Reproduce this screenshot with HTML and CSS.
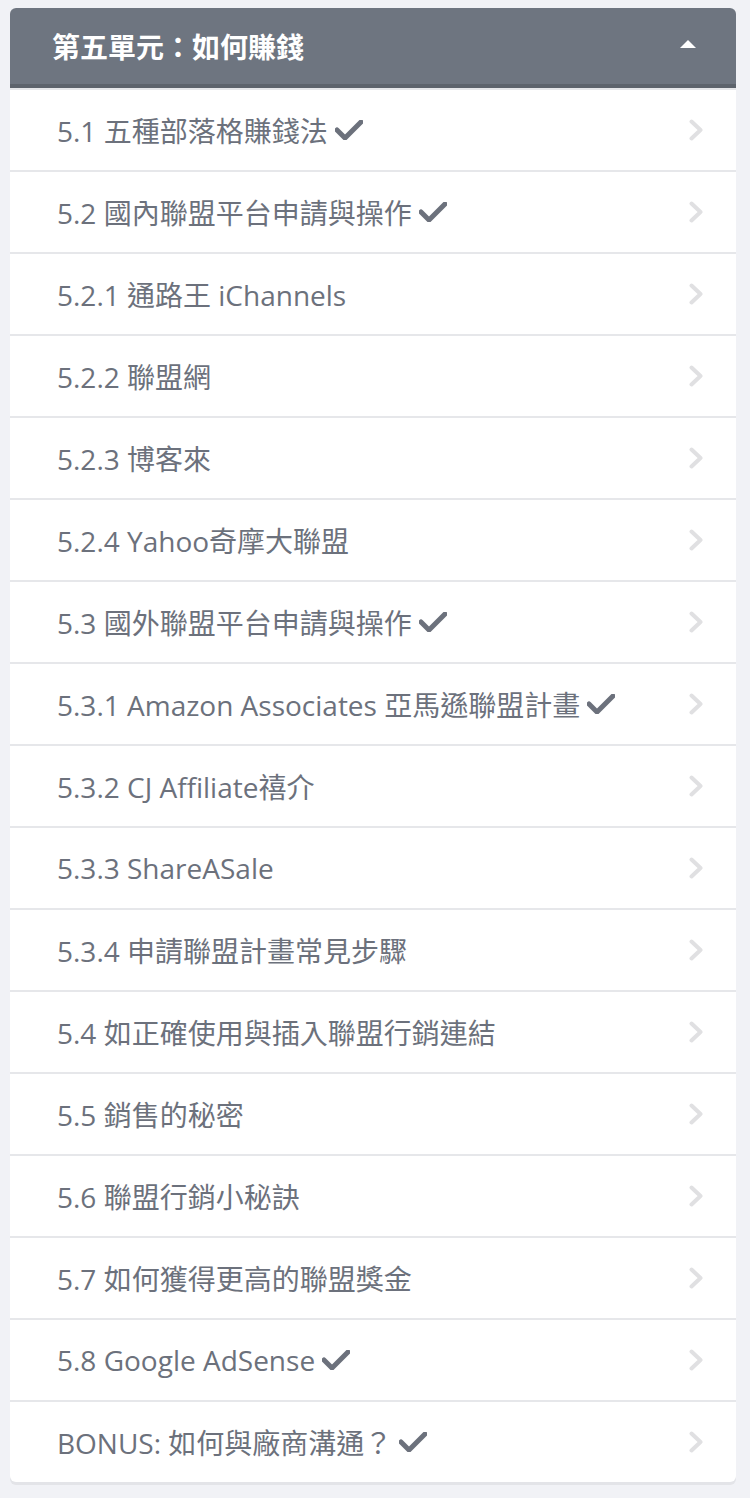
FILE: index.html
```html
<!DOCTYPE html>
<html lang="zh-Hant">
<head>
<meta charset="utf-8">
<link rel="stylesheet" href="styles.css">
</head>
<body>
<div class="wrap">
  <div class="card">
    <div class="head">
      <span class="head-title">第五單元：如何賺錢</span>
      <svg class="caret" width="16" height="8" viewBox="0 0 16 8"><path d="M0 8 L8 0 L16 8 Z" fill="#fff"/></svg>
    </div>
    <ul class="list">
      <li class="row"><span class="label">5.1 五種部落格賺錢法<svg class="check" viewBox="0 0 28 20"><path d="M2 10 L10 18 L26 2" fill="none" stroke="currentColor" stroke-width="5" stroke-linecap="round" stroke-linejoin="round"/></svg></span><svg class="chev" viewBox="0 0 14 22"><path d="M2.5 2.5 L11.5 11 L2.5 19.5" fill="none" stroke="currentColor" stroke-width="4" stroke-linecap="round" stroke-linejoin="round"/></svg></li>
      <li class="row"><span class="label">5.2 國內聯盟平台申請與操作<svg class="check" viewBox="0 0 28 20"><path d="M2 10 L10 18 L26 2" fill="none" stroke="currentColor" stroke-width="5" stroke-linecap="round" stroke-linejoin="round"/></svg></span><svg class="chev" viewBox="0 0 14 22"><path d="M2.5 2.5 L11.5 11 L2.5 19.5" fill="none" stroke="currentColor" stroke-width="4" stroke-linecap="round" stroke-linejoin="round"/></svg></li>
      <li class="row"><span class="label">5.2.1 通路王 iChannels</span><svg class="chev" viewBox="0 0 14 22"><path d="M2.5 2.5 L11.5 11 L2.5 19.5" fill="none" stroke="currentColor" stroke-width="4" stroke-linecap="round" stroke-linejoin="round"/></svg></li>
      <li class="row"><span class="label">5.2.2 聯盟網</span><svg class="chev" viewBox="0 0 14 22"><path d="M2.5 2.5 L11.5 11 L2.5 19.5" fill="none" stroke="currentColor" stroke-width="4" stroke-linecap="round" stroke-linejoin="round"/></svg></li>
      <li class="row"><span class="label">5.2.3 博客來</span><svg class="chev" viewBox="0 0 14 22"><path d="M2.5 2.5 L11.5 11 L2.5 19.5" fill="none" stroke="currentColor" stroke-width="4" stroke-linecap="round" stroke-linejoin="round"/></svg></li>
      <li class="row"><span class="label">5.2.4 Yahoo奇摩大聯盟</span><svg class="chev" viewBox="0 0 14 22"><path d="M2.5 2.5 L11.5 11 L2.5 19.5" fill="none" stroke="currentColor" stroke-width="4" stroke-linecap="round" stroke-linejoin="round"/></svg></li>
      <li class="row"><span class="label">5.3 國外聯盟平台申請與操作<svg class="check" viewBox="0 0 28 20"><path d="M2 10 L10 18 L26 2" fill="none" stroke="currentColor" stroke-width="5" stroke-linecap="round" stroke-linejoin="round"/></svg></span><svg class="chev" viewBox="0 0 14 22"><path d="M2.5 2.5 L11.5 11 L2.5 19.5" fill="none" stroke="currentColor" stroke-width="4" stroke-linecap="round" stroke-linejoin="round"/></svg></li>
      <li class="row"><span class="label">5.3.1 Amazon Associates 亞馬遜聯盟計畫<svg class="check" viewBox="0 0 28 20"><path d="M2 10 L10 18 L26 2" fill="none" stroke="currentColor" stroke-width="5" stroke-linecap="round" stroke-linejoin="round"/></svg></span><svg class="chev" viewBox="0 0 14 22"><path d="M2.5 2.5 L11.5 11 L2.5 19.5" fill="none" stroke="currentColor" stroke-width="4" stroke-linecap="round" stroke-linejoin="round"/></svg></li>
      <li class="row"><span class="label">5.3.2 CJ Affiliate禧介</span><svg class="chev" viewBox="0 0 14 22"><path d="M2.5 2.5 L11.5 11 L2.5 19.5" fill="none" stroke="currentColor" stroke-width="4" stroke-linecap="round" stroke-linejoin="round"/></svg></li>
      <li class="row"><span class="label">5.3.3 ShareASale</span><svg class="chev" viewBox="0 0 14 22"><path d="M2.5 2.5 L11.5 11 L2.5 19.5" fill="none" stroke="currentColor" stroke-width="4" stroke-linecap="round" stroke-linejoin="round"/></svg></li>
      <li class="row"><span class="label">5.3.4 申請聯盟計畫常見步驟</span><svg class="chev" viewBox="0 0 14 22"><path d="M2.5 2.5 L11.5 11 L2.5 19.5" fill="none" stroke="currentColor" stroke-width="4" stroke-linecap="round" stroke-linejoin="round"/></svg></li>
      <li class="row"><span class="label">5.4 如正確使用與插入聯盟行銷連結</span><svg class="chev" viewBox="0 0 14 22"><path d="M2.5 2.5 L11.5 11 L2.5 19.5" fill="none" stroke="currentColor" stroke-width="4" stroke-linecap="round" stroke-linejoin="round"/></svg></li>
      <li class="row"><span class="label">5.5 銷售的秘密</span><svg class="chev" viewBox="0 0 14 22"><path d="M2.5 2.5 L11.5 11 L2.5 19.5" fill="none" stroke="currentColor" stroke-width="4" stroke-linecap="round" stroke-linejoin="round"/></svg></li>
      <li class="row"><span class="label">5.6 聯盟行銷小秘訣</span><svg class="chev" viewBox="0 0 14 22"><path d="M2.5 2.5 L11.5 11 L2.5 19.5" fill="none" stroke="currentColor" stroke-width="4" stroke-linecap="round" stroke-linejoin="round"/></svg></li>
      <li class="row"><span class="label">5.7 如何獲得更高的聯盟獎金</span><svg class="chev" viewBox="0 0 14 22"><path d="M2.5 2.5 L11.5 11 L2.5 19.5" fill="none" stroke="currentColor" stroke-width="4" stroke-linecap="round" stroke-linejoin="round"/></svg></li>
      <li class="row"><span class="label">5.8 Google AdSense<svg class="check" viewBox="0 0 28 20"><path d="M2 10 L10 18 L26 2" fill="none" stroke="currentColor" stroke-width="5" stroke-linecap="round" stroke-linejoin="round"/></svg></span><svg class="chev" viewBox="0 0 14 22"><path d="M2.5 2.5 L11.5 11 L2.5 19.5" fill="none" stroke="currentColor" stroke-width="4" stroke-linecap="round" stroke-linejoin="round"/></svg></li>
      <li class="row"><span class="label">BONUS: 如何與廠商溝通？<svg class="check" viewBox="0 0 28 20"><path d="M2 10 L10 18 L26 2" fill="none" stroke="currentColor" stroke-width="5" stroke-linecap="round" stroke-linejoin="round"/></svg></span><svg class="chev" viewBox="0 0 14 22"><path d="M2.5 2.5 L11.5 11 L2.5 19.5" fill="none" stroke="currentColor" stroke-width="4" stroke-linecap="round" stroke-linejoin="round"/></svg></li>
    </ul>
  </div>
</div>
</body>
</html>
```
FILE: styles.css
```css
html, body {
  margin: 0;
  padding: 0;
  background: #f1f2f6;
}
.wrap {
  padding: 8px 14px 16px 10px;
}
.card {
  background: #fff;
  border-radius: 6px;
  box-shadow: 0 3px 0 #e3e4e8;
  overflow: hidden;
}
.head {
  height: 76px;
  background: #6e7580;
  border-bottom: 4px solid #5d636c;
  box-shadow: 0 2px 0 #e6e7ea;
  display: flex;
  align-items: center;
  justify-content: space-between;
  padding: 0 40px 0 42px;
  position: relative;
}
.head-title {
  color: #fff;
  font-family: "Open Sans", "Noto Sans CJK TC", sans-serif;
  font-weight: 700;
  font-size: 28px;
}
.caret {
  width: 16px;
  height: 8px;
  margin-top: -4px;
}
.list {
  list-style: none;
  margin: 0;
  padding: 2px 0 0 0;
}
.row {
  height: 80px;
  display: flex;
  align-items: center;
  justify-content: space-between;
  padding: 0 33px 0 47px;
  border-bottom: 2px solid #e6e7ea;
}
.row:last-child {
  border-bottom: none;
}
.label {
  color: #6c717c;
  font-family: "Open Sans", "Noto Sans CJK TC", sans-serif;
  font-size: 28px;
  display: flex;
  align-items: center;
}
.check {
  width: 28px;
  height: 20px;
  margin-left: 7px;
  color: #6c717c;
}
.chev {
  width: 14px;
  height: 22px;
  color: #e0e0e2;
}
```
